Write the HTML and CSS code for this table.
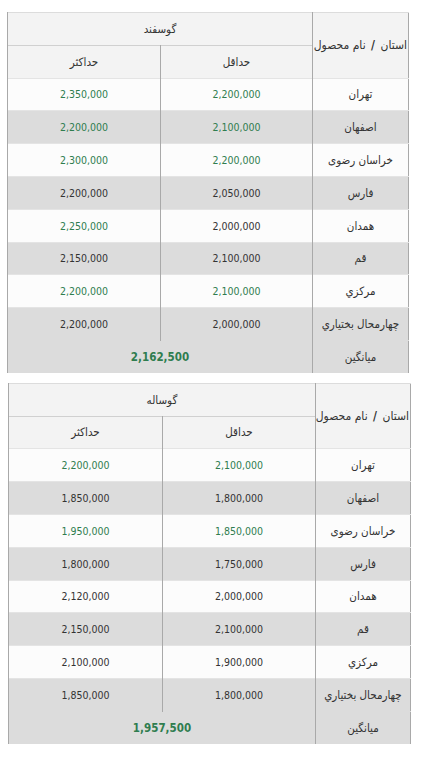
FILE: index.html
```html
<!DOCTYPE html>
<html lang="fa">
<head>
<meta charset="utf-8">
<link rel="stylesheet" href="styles.css">
</head>
<body>
<table class="price t1">
  <colgroup><col class="c-name"><col class="c-min"><col class="c-max"></colgroup>
  <tr class="hd">
    <td rowspan="2" class="name-h">استان <b>/</b> نام محصول</td>
    <td colspan="2" class="ar">گوسفند</td>
  </tr>
  <tr class="hd hd2"><td class="ar">حداقل</td><td class="ar">حداکثر</td></tr>
  <tr class="w"><td class="ar">تهران</td><td class="g">2,200,000</td><td class="g">2,350,000</td></tr>
  <tr class="d"><td class="ar">اصفهان</td><td class="g">2,100,000</td><td class="g">2,200,000</td></tr>
  <tr class="w"><td class="ar">خراسان رضوی</td><td class="g">2,200,000</td><td class="g">2,300,000</td></tr>
  <tr class="d"><td class="ar">فارس</td><td>2,050,000</td><td>2,200,000</td></tr>
  <tr class="w"><td class="ar">همدان</td><td>2,000,000</td><td class="g">2,250,000</td></tr>
  <tr class="d"><td class="ar">قم</td><td>2,100,000</td><td>2,150,000</td></tr>
  <tr class="w"><td class="ar">مرکزي</td><td class="g">2,100,000</td><td class="g">2,200,000</td></tr>
  <tr class="d"><td class="ar">چهارمحال بختياري</td><td>2,000,000</td><td>2,200,000</td></tr>
  <tr class="d avg"><td class="ar">میانگین</td><td colspan="2" class="mean">2,162,500</td></tr>
</table>

<table class="price t2">
  <colgroup><col class="c-name"><col class="c-min"><col class="c-max"></colgroup>
  <tr class="hd">
    <td rowspan="2" class="name-h">استان <b>/</b> نام محصول</td>
    <td colspan="2" class="ar">گوساله</td>
  </tr>
  <tr class="hd hd2"><td class="ar">حداقل</td><td class="ar">حداکثر</td></tr>
  <tr class="w"><td class="ar">تهران</td><td class="g">2,100,000</td><td class="g">2,200,000</td></tr>
  <tr class="d"><td class="ar">اصفهان</td><td>1,800,000</td><td>1,850,000</td></tr>
  <tr class="w"><td class="ar">خراسان رضوی</td><td class="g">1,850,000</td><td class="g">1,950,000</td></tr>
  <tr class="d"><td class="ar">فارس</td><td>1,750,000</td><td>1,800,000</td></tr>
  <tr class="w"><td class="ar">همدان</td><td>2,000,000</td><td>2,120,000</td></tr>
  <tr class="d"><td class="ar">قم</td><td>2,100,000</td><td>2,150,000</td></tr>
  <tr class="w"><td class="ar">مرکزي</td><td>1,900,000</td><td>2,100,000</td></tr>
  <tr class="d"><td class="ar">چهارمحال بختياري</td><td>1,800,000</td><td>1,850,000</td></tr>
  <tr class="d avg"><td class="ar">میانگین</td><td colspan="2" class="mean">1,957,500</td></tr>
</table>
</body>
</html>
```
FILE: styles.css
```css
html, body {
  margin: 0;
  padding: 0;
  background: #ffffff;
}
body {
  padding-top: 12px;
  font-family: "DejaVu Sans Condensed", "DejaVu Sans", sans-serif;
  font-size: 10.5px;
  color: #333333;
}
.price {
  direction: rtl;
  border-collapse: collapse;
  table-layout: fixed;
  border-left: 1px solid #a9a9a9;
  border-right: 1px solid #a9a9a9;
}
.t1 {
  width: 402px;
  margin-left: 7px;
}
.t2 {
  width: 403px;
  margin-left: 8px;
  margin-top: 10px;
}
.t1 .c-name { width: 96px; }
.t2 .c-name { width: 95px; }
.t1 .c-min { width: 152px; }
.t2 .c-min { width: 153px; }
.price td {
  height: 31.8px;
  padding: 0;
  text-align: center;
  vertical-align: middle;
  border-top: 1px solid #e4e4e4;
  border-left: 1px solid #a9a9a9;
  white-space: nowrap;
}
.price tr:first-child td { border-top: 1px solid #dcdcdc; }
.price .ar { font-size: 11.5px; }
.hd td { background: #f3f3f3; }
.hd2 td { border-top: 1px solid #d0d0d0; }
.name-h {
  text-align: right !important;
  padding-right: 1px !important;
  font-size: 12px;
}
.name-h b { font-weight: bold; padding: 0 2px; }
.w td { background: #fcfcfc; }
.d td { background: #dcdcdc; }
.avg td { border-top-color: #dcdcdc; }
.g { color: #2f7d4f; }
.mean {
  color: #2f7d4f;
  font-weight: bold;
  font-size: 11.5px;
}
```
